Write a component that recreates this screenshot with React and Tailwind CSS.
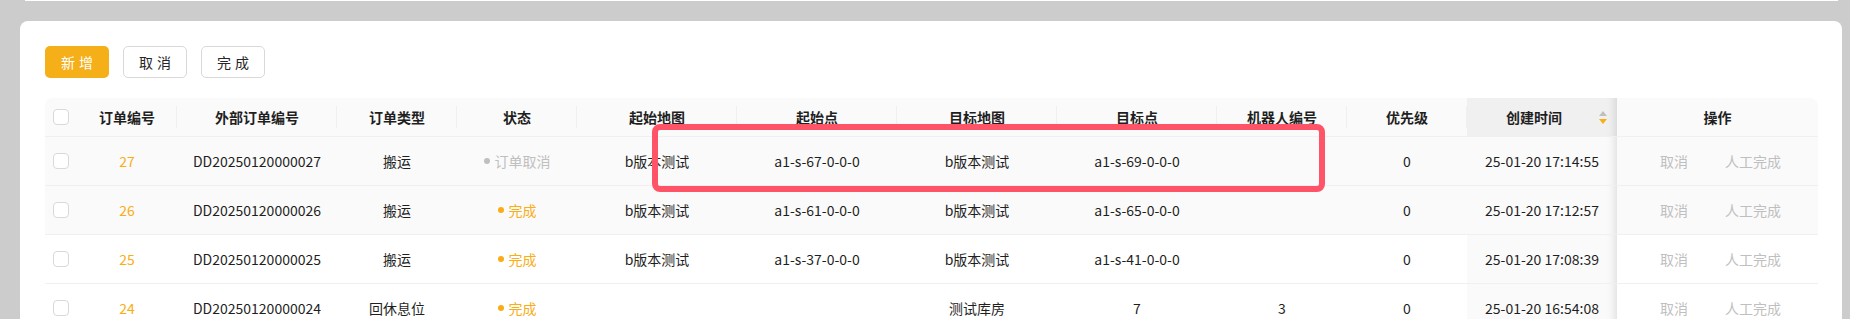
import React from "react";

const grid =
  "grid grid-cols-[32px_100px_160px_120px_120px_160px_160px_160px_160px_130px_120px_150px_1fr]";

const sep =
  "relative after:absolute after:right-0 after:top-1/2 after:-translate-y-1/2 after:h-[22px] after:w-px after:bg-[#f0f0f0]";

const rows = [
  { id: "27", ext: "DD20250120000027", type: "搬运", status: "cancel", fromMap: "b版本测试", from: "a1-s-67-0-0-0", toMap: "b版本测试", to: "a1-s-69-0-0-0", robot: "", pri: "0", time: "25-01-20 17:14:55", shade: true },
  { id: "26", ext: "DD20250120000026", type: "搬运", status: "done", fromMap: "b版本测试", from: "a1-s-61-0-0-0", toMap: "b版本测试", to: "a1-s-65-0-0-0", robot: "", pri: "0", time: "25-01-20 17:12:57", shade: true },
  { id: "25", ext: "DD20250120000025", type: "搬运", status: "done", fromMap: "b版本测试", from: "a1-s-37-0-0-0", toMap: "b版本测试", to: "a1-s-41-0-0-0", robot: "", pri: "0", time: "25-01-20 17:08:39", shade: false },
  { id: "24", ext: "DD20250120000024", type: "回休息位", status: "done", fromMap: "", from: "", toMap: "测试库房", to: "7", robot: "3", pri: "0", time: "25-01-20 16:54:08", shade: false },
];

const Checkbox = () => (
  <span className="w-4 h-4 rounded-[4px] border border-[#d9d9d9] bg-white" />
);

const Btn = ({ children, primary }) => (
  <button
    className={`w-16 h-8 rounded-[5px] text-sm flex items-center justify-center ${
      primary
        ? "bg-[#f5af19] text-white"
        : "bg-white border border-[#d9d9d9] text-[#262626]"
    }`}
  >
    <span className="tracking-[0.3em] -mr-[0.3em]">{children}</span>
  </button>
);

const SortIcon = () => (
  <svg width="8" height="13" viewBox="0 0 8 13" className="ml-[14px] shrink-0">
    <path d="M4 0 L8 5 L0 5 Z" fill="#bfbfbf" />
    <path d="M0 8 L8 8 L4 13 Z" fill="#faad14" />
  </svg>
);

const Status = ({ s }) =>
  s === "cancel" ? (
    <div className="flex items-center justify-center gap-[5px] text-[#bfbfbf]">
      <span className="w-[6px] h-[6px] rounded-full bg-[#bfbfbf]" />
      订单取消
    </div>
  ) : (
    <div className="flex items-center justify-center gap-[5px] text-[#faad14]">
      <span className="w-[6px] h-[6px] rounded-full bg-[#faad14]" />
      完成
    </div>
  );

const fixShadow = "shadow-[inset_-10px_0_8px_-8px_rgba(5,5,5,0.12)]";

export default function App() {
  return (
    <div className="w-[1850px] h-[319px] bg-[#cccccc] overflow-hidden font-['Noto_Sans_CJK_SC',sans-serif] text-sm text-[#1f1f1f]">
      <div className="h-px mx-[25px] w-[1813px] bg-white" />
      <div className="mt-[20px] ml-[20px] w-[1822px] h-[400px] bg-white rounded-lg pt-[25px] pl-[25px] pr-[24px]">
        <div className="flex gap-[14px]">
          <Btn primary>新增</Btn>
          <Btn>取消</Btn>
          <Btn>完成</Btn>
        </div>

        <div className="relative mt-[20px]">
          {/* header */}
          <div className={`${grid} h-[39px] bg-[#fafafa] border-b border-[#f0f0f0] rounded-tl-lg rounded-tr-lg font-semibold text-[#1f1f1f]`}>
            <div className="flex items-center justify-center">
              <Checkbox />
            </div>
            {["订单编号", "外部订单编号", "订单类型", "状态", "起始地图", "起始点", "目标地图", "目标点", "机器人编号", "优先级"].map((t) => (
              <div key={t} className={`${sep} flex items-center justify-center`}>
                {t}
              </div>
            ))}
            <div className={`flex items-center pl-[16px] pr-[10px] bg-[#f0f0f0] ${fixShadow}`}>
              <span className="flex-1 text-center">创建时间</span>
              <SortIcon />
            </div>
            <div className="flex items-center justify-center">操作</div>
          </div>

          {/* body */}
          {rows.map((r) => (
            <div
              key={r.id}
              className={`${grid} h-[49px] border-b border-[#f0f0f0] ${r.shade ? "bg-[#fafafa]" : "bg-white"}`}
            >
              <div className="flex items-center justify-center">
                <Checkbox />
              </div>
              <div className="flex items-center justify-center text-[#faad14]">{r.id}</div>
              <div className="flex items-center justify-center">{r.ext}</div>
              <div className="flex items-center justify-center">{r.type}</div>
              <div className="flex items-center justify-center">
                <Status s={r.status} />
              </div>
              <div className="flex items-center justify-center">{r.fromMap}</div>
              <div className="flex items-center justify-center">{r.from}</div>
              <div className="flex items-center justify-center">{r.toMap}</div>
              <div className="flex items-center justify-center">{r.to}</div>
              <div className="flex items-center justify-center">{r.robot}</div>
              <div className="flex items-center justify-center">{r.pri}</div>
              <div className={`flex items-center justify-center bg-[#fafafa] ${fixShadow}`}>{r.time}</div>
              <div className="flex items-center justify-center gap-[37px] pl-[6px] text-[#bfbfbf]">
                <span>取消</span>
                <span>人工完成</span>
              </div>
            </div>
          ))}

          {/* annotation box */}
          <div className="absolute left-[607px] top-[26px] w-[673px] h-[68px] border-[6px] border-[#ff5468] rounded-[8px] pointer-events-none" />
        </div>
      </div>
    </div>
  );
}
